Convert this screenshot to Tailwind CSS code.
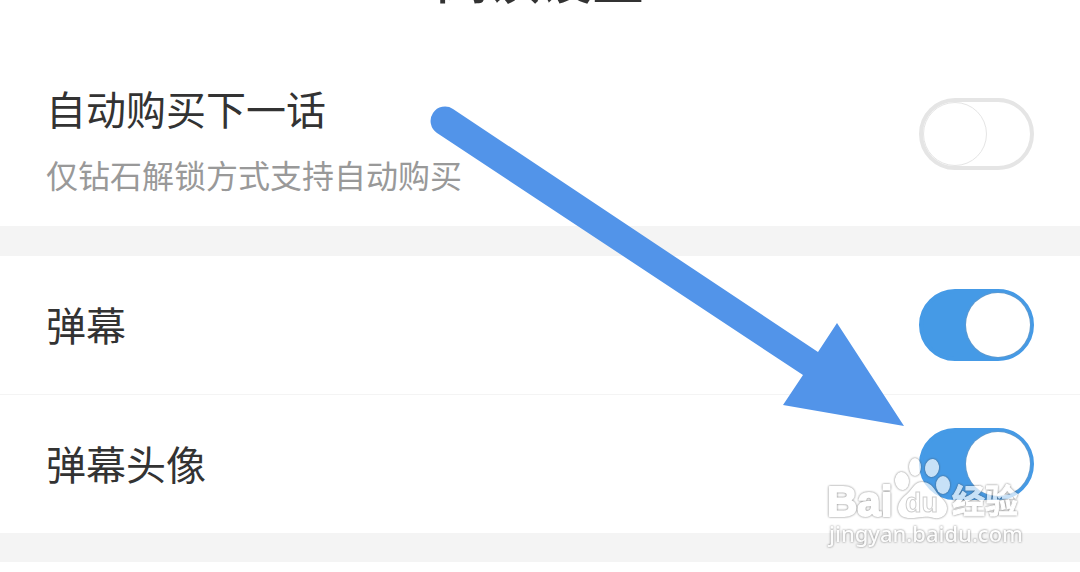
<!DOCTYPE html>
<html lang="zh-CN">
  <head>
    <meta charset="UTF-8" />
    <meta name="viewport" content="width=device-width, initial-scale=1.0" />
    <title>阅读设置</title>
    <script src="https://cdn.jsdelivr.net/npm/@tailwindcss/browser@4"></script>
  </head>

  <body class="relative overflow-x-hidden bg-white text-[#333] font-['Noto_Sans_CJK_SC',sans-serif]">
    <!-- Header, scrolled almost out of view -->
    <header class="h-10 relative">
      <h1 class="absolute inset-x-0 bottom-[35px] text-center text-[52px] leading-[56px] font-medium">阅读设置</h1>
    </header>

    <main>
      <!-- Auto purchase -->
      <section class="flex items-start justify-between px-[46px] pt-[38px] pb-[27px]">
        <div>
          <label for="autoBuy" class="block text-[40px] leading-[60px]">自动购买下一话</label>
          <p class="mt-[11px] text-[32px] leading-[50px] text-[#999]">仅钻石解锁方式支持自动购买</p>
        </div>
        <input type="checkbox" id="autoBuy" class="mt-5 appearance-none shrink-0 w-[115px] h-[72px] rounded-full border-4 border-[#e5e5e5] bg-white before:block before:size-16 before:rounded-full before:border before:border-[#e5e5e5] before:bg-white checked:border-[#459ae6] checked:bg-[#459ae6]" />
      </section>

      <!-- Bullet comments -->
      <section class="border-t-[30px] border-b-[29px] border-[#f4f4f4]">
        <div class="flex items-center justify-between h-[138px] px-[46px]">
          <label for="danmu" class="pb-0.5 text-[40px] leading-[60px]">弹幕</label>
          <input type="checkbox" id="danmu" checked class="appearance-none shrink-0 w-[115px] h-[72px] rounded-full border-4 border-[#459ae6] bg-[#459ae6] before:block before:size-16 before:ml-auto before:rounded-full before:bg-white before:shadow-[0_0_2px_#8a9aa8]" />
        </div>
        <div class="flex items-center justify-between h-[139px] px-[46px] border-t border-[#f4f4f4]">
          <label for="danmuAvatar" class="pb-0.5 text-[40px] leading-[60px]">弹幕头像</label>
          <input type="checkbox" id="danmuAvatar" checked class="appearance-none shrink-0 w-[115px] h-[72px] rounded-full border-4 border-[#459ae6] bg-[#459ae6] before:block before:size-16 before:ml-auto before:rounded-full before:bg-white before:shadow-[0_0_2px_#8a9aa8]" />
        </div>
      </section>
    </main>

    <!-- Arrow pointing at the last switch -->
    <svg class="absolute right-[176px] top-[106px] w-[474px] h-[322px] pointer-events-none" viewBox="430 106 474 322" fill="#5294e9" aria-hidden="true">
      <path d="M453 109 L818 352 L837 323 L904 426 L783 405 L803 375 L437 133 A14 14 0 0 1 453 109 Z" />
    </svg>

    <!-- Watermark -->
    <svg class="absolute right-[50px] top-[450px] w-[210px] h-[104px] pointer-events-none opacity-70 drop-shadow-[0_0_1px_#444]" viewBox="820 450 210 104" aria-label="Baidu 经验 jingyan.baidu.com">
      <g fill="#fff">
        <ellipse cx="902" cy="481" rx="7" ry="9" transform="rotate(-8 902 481)" />
        <ellipse cx="915" cy="467" rx="6" ry="9" />
        <ellipse cx="932" cy="468" rx="7" ry="9" transform="rotate(8 932 468)" />
        <ellipse cx="943" cy="485" rx="7" ry="9" />
        <path d="M922 482 C914 482 913 489 907 494 C901 499 898 503 898 509 C899 516 904 518 910 518 C918 518 926 515 934 518 C942 519 947 515 947 508 C947 501 939 497 935 490 C932 485 928 482 922 482 Z" />
        <g stroke="#fff" stroke-linejoin="round">
          <text x="827" y="516" font-size="42" font-weight="700" stroke-width="2" font-family="Liberation Sans, sans-serif">Bai</text>
          <text x="952" y="513" font-size="33" font-weight="700" stroke-width="1" font-family="Noto Sans CJK SC, sans-serif">经验</text>
        </g>
        <text x="905" y="512" font-size="27" font-weight="700" stroke="#bbb" stroke-width="1" font-family="Liberation Sans, sans-serif">du</text>
        <text x="829" y="542" font-size="22" font-weight="500" font-family="Noto Sans, sans-serif">jingyan.baidu.com</text>
      </g>
    </svg>
  </body>
</html>
